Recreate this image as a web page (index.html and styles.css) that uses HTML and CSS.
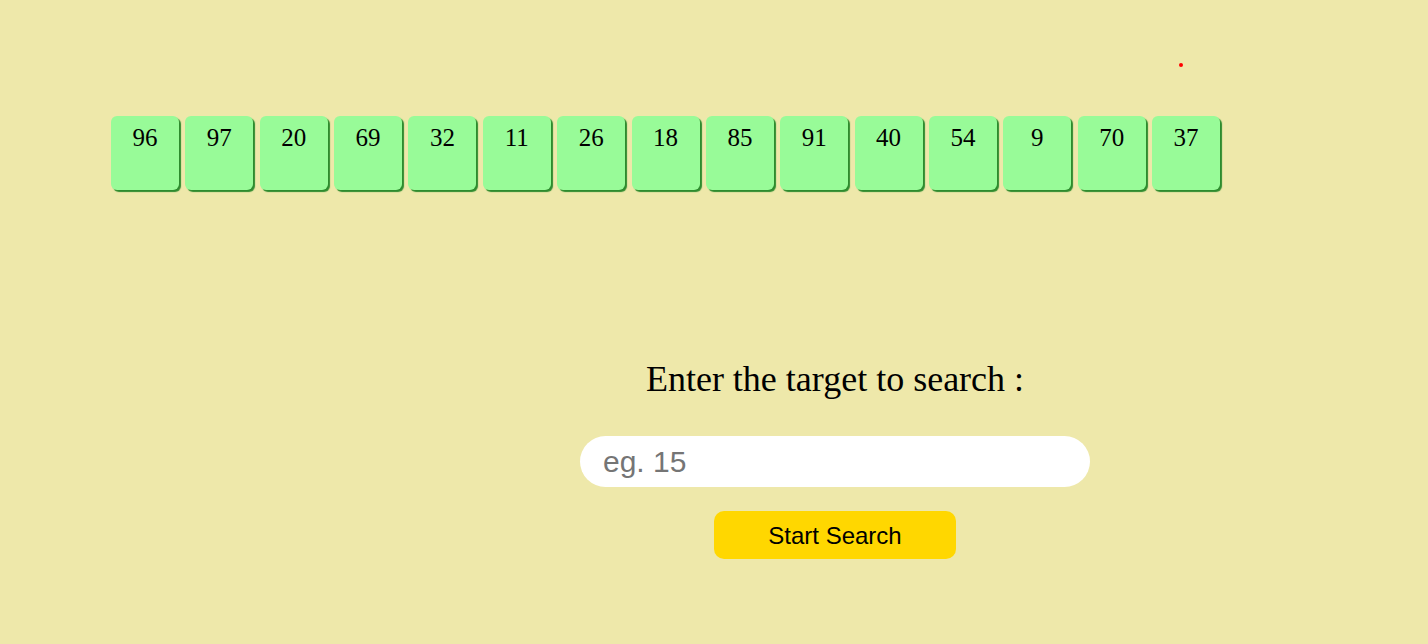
FILE: index.html
```html
<!DOCTYPE html>
<html>
<head>
<meta charset="utf-8">
<link rel="stylesheet" href="styles.css">
</head>
<body>
<div class="stage">
  <span class="dot"></span>
  <div class="row">
    <div class="cell">96</div>
    <div class="cell">97</div>
    <div class="cell">20</div>
    <div class="cell">69</div>
    <div class="cell">32</div>
    <div class="cell">11</div>
    <div class="cell">26</div>
    <div class="cell">18</div>
    <div class="cell">85</div>
    <div class="cell">91</div>
    <div class="cell">40</div>
    <div class="cell">54</div>
    <div class="cell">9</div>
    <div class="cell">70</div>
    <div class="cell">37</div>
  </div>
</div>
<div class="form">
  <h2 class="title">Enter the target to search :</h2>
  <input class="target" type="text" placeholder="eg. 15">
  <button class="start">Start Search</button>
</div>
</body>
</html>
```
FILE: styles.css
```css
html, body {
  margin: 0;
  padding: 0;
}
body {
  background: #eee8aa;
  font-family: "Liberation Serif", "Times New Roman", serif;
  width: 1428px;
  height: 644px;
  overflow: hidden;
}
.stage {
  position: relative;
  padding: 116px 0 0 111px;
  height: 76px;
}
.dot {
  position: absolute;
  left: 1179px;
  top: 63px;
  width: 4px;
  height: 4px;
  border-radius: 50%;
  background: #ff0000;
}
.row {
  display: flex;
  gap: 6.36px;
}
.cell {
  width: 68px;
  height: 74px;
  box-sizing: border-box;
  background: #98fb98;
  border-radius: 6px;
  box-shadow: 2px 2px 1px #2e8b2e;
  text-align: center;
  font-size: 25px;
  padding-top: 8px;
  color: #000;
}
.form {
  width: 510px;
  margin-left: 580px;
  margin-top: 166px;
  display: flex;
  flex-direction: column;
  align-items: center;
}
.title {
  margin: 0;
  font-weight: normal;
  font-size: 36px;
  line-height: 42px;
  white-space: nowrap;
  color: #000;
}
.target {
  margin-top: 36px;
  width: 510px;
  height: 51px;
  box-sizing: border-box;
  border: none;
  outline: none;
  border-radius: 26px;
  background: #fff;
  padding: 0 0 0 23px;
  font-family: "Liberation Sans", Arial, sans-serif;
  font-size: 30px;
  color: #000;
}
.target::placeholder {
  color: #757575;
}
.start {
  margin-top: 24px;
  width: 242px;
  height: 48px;
  border: none;
  border-radius: 10px;
  background: #ffd700;
  font-family: "Liberation Sans", Arial, sans-serif;
  font-size: 24px;
  color: #000;
  padding: 2px 0 0;
}
```
